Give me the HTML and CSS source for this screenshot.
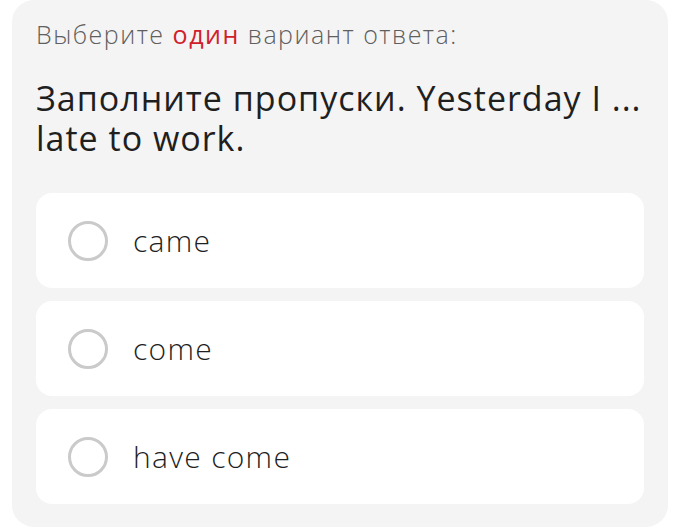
FILE: index.html
```html
<!DOCTYPE html>
<html lang="ru">
<head>
<meta charset="utf-8">
<link rel="stylesheet" href="styles.css">
</head>
<body>
<div class="card">
  <div class="hint">Выберите <span class="accent">один</span> вариант ответа:</div>
  <div class="question">Заполните пропуски. Yesterday I ... late to work.</div>
  <div class="options">
    <div class="option"><span class="radio"></span><span class="label">came</span></div>
    <div class="option"><span class="radio"></span><span class="label">come</span></div>
    <div class="option"><span class="radio"></span><span class="label">have come</span></div>
  </div>
</div>
</body>
</html>
```
FILE: styles.css
```css
html, body {
  margin: 0;
  padding: 0;
  background: #ffffff;
}
body {
  font-family: "Open Sans", Lato, sans-serif;
}
.card {
  box-sizing: border-box;
  margin-left: 12px;
  width: 656px;
  height: 527px;
  background: #f4f4f4;
  border-radius: 22px;
  padding: 18px 24px 24px 24px;
  display: flex;
  flex-direction: column;
}
.hint {
  font-size: 25px;
  line-height: 32px;
  letter-spacing: 1.5px;
  color: #5f5f5f;
  font-weight: 300;
}
.accent {
  color: #d0212b;
  font-weight: 400;
}
.question {
  margin-top: 28px;
  font-size: 34px;
  line-height: 40px;
  letter-spacing: 1px;
  color: #1f1f1f;
  font-weight: 400;
}
.options {
  margin-top: 35px;
  display: flex;
  flex-direction: column;
  gap: 13px;
}
.option {
  height: 95px;
  background: #ffffff;
  border-radius: 16px;
  display: flex;
  align-items: center;
  padding-left: 32px;
  box-sizing: border-box;
}
.radio {
  box-sizing: border-box;
  width: 40px;
  height: 40px;
  border: 3.5px solid #cacaca;
  border-radius: 50%;
  flex: none;
}
.label {
  margin-left: 25px;
  font-size: 30px;
  letter-spacing: 1.3px;
  font-weight: 300;
  color: #1f1f1f;
}
```
